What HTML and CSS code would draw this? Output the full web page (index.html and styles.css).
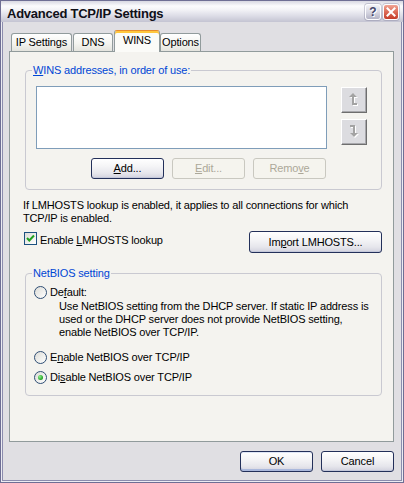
FILE: index.html
```html
<!DOCTYPE html>
<html>
<head>
<meta charset="utf-8">
<link rel="stylesheet" href="styles.css">
</head>
<body>
<div class="window">
  <div class="titlebar">
    <span class="title">Advanced TCP/IP Settings</span>
    <span class="capbtn help">?</span>
    <span class="capbtn close"><svg width="14" height="14" viewBox="0 0 14 14"><path d="M3.5 3.5 L10.5 10.5 M10.5 3.5 L3.5 10.5" stroke="#fff" stroke-width="2" stroke-linecap="square"/></svg></span>
  </div>
  <div class="client">
    <div class="tabs">
      <div class="tab t-ip">IP Settings</div>
      <div class="tab t-dns">DNS</div>
      <div class="tab t-wins active">WINS</div>
      <div class="tab t-opt">Options</div>
    </div>
    <div class="panel">
      <fieldset class="group g-wins">
        <legend><u>W</u>INS addresses, in order of use:</legend>
        <div class="wins-grid">
          <div class="listbox"></div>
          <div class="arrows">
            <span class="arrow"><svg width="10" height="14" viewBox="0 0 10 14"><path d="M5 1 L9 5 H6 V11 H9 V13 H4 V5 H1 Z" fill="#fff"/><path d="M4 0 L8 4 H5 V10 H8 V12 H3 V4 H0 Z" fill="#a3a3a3"/></svg></span>
            <span class="arrow"><svg width="10" height="14" viewBox="0 0 10 14"><path d="M2 1 H7 V9 H10 L6 13 L2 9 H5 V3 H2 Z" fill="#fff"/><path d="M1 0 H6 V8 H9 L5 12 L1 8 H4 V2 H1 Z" fill="#a3a3a3"/></svg></span>
          </div>
          <div class="btnrow">
            <span class="btn"><u>A</u>dd...</span>
            <span class="btn disabled"><u>E</u>dit...</span>
            <span class="btn disabled">Remo<u>v</u>e</span>
          </div>
        </div>
      </fieldset>
      <p class="note">If LMHOSTS lookup is enabled, it applies to all connections for which<br>TCP/IP is enabled.</p>
      <div class="lmrow">
        <div class="check"><span class="cb"><svg width="11" height="11" viewBox="0 0 11 11"><path d="M2 5 L4.3 7.5 L9 2.5" stroke="#21a121" stroke-width="2" fill="none"/></svg></span><span class="cbtext">Enable <u>L</u>MHOSTS lookup</span></div>
        <span class="btn import">Im<u>p</u>ort LMHOSTS...</span>
      </div>
      <fieldset class="group g-nb">
        <legend>NetBIOS setting</legend>
        <div class="radio r-default"><span class="rb"></span><span>De<u>f</u>ault:</span></div>
        <p class="desc">Use NetBIOS setting from the DHCP server. If static IP address is<br>used or the DHCP server does not provide NetBIOS setting,<br>enable NetBIOS over TCP/IP.</p>
        <div class="radio r-enable"><span class="rb"></span><span>E<u>n</u>able NetBIOS over TCP/IP</span></div>
        <div class="radio r-disable"><span class="rb on"></span><span>Di<u>s</u>able NetBIOS over TCP/IP</span></div>
      </fieldset>
    </div>
    <div class="footer">
      <span class="btn default">OK</span>
      <span class="btn">Cancel</span>
    </div>
  </div>
</div>
</body>
</html>
```
FILE: styles.css
```css
* { box-sizing: border-box; }
html, body { margin: 0; padding: 0; }
body {
  font: 11px/13px "Liberation Sans", Arial, sans-serif;
  letter-spacing: -0.15px;
  color: #000;
  background: #fff;
}
u { text-decoration: underline; text-underline-offset: 1px; }

.window {
  width: 404px;
  height: 483px;
  border: 1px solid #6e6e94;
  background: #e0dfe3;
  display: flex;
  flex-direction: column;
  box-shadow: inset 0 0 0 1px #ececf2, inset 0 0 0 2px #8c8cae;
}

.titlebar {
  flex: none;
  height: 21px;
  display: flex;
  align-items: flex-start;
  padding: 0 4px 0 6px;
  background: linear-gradient(to bottom, #d8d8e2 0px, #fbfbfd 5px, #f2f2f6 9px, #dcdce6 15px, #c4c4d2 21px);
}
.title {
  font: bold 13px/17px "Liberation Sans", Arial, sans-serif;
  letter-spacing: -0.25px;
  color: #101018;
  padding-top: 4px;
}
.capbtn {
  width: 16px;
  height: 16px;
  margin-top: 3px;
  border: 1px solid #fdfdff;
  border-radius: 3px;
  display: flex;
  align-items: center;
  justify-content: center;
  box-shadow: 0 0 0 1px rgba(120,120,150,0.35);
}
.help {
  margin-left: auto;
  background: linear-gradient(to bottom, #f2f2f6, #d4d4e0 55%, #b4b4c6);
  color: #45456a;
  font: bold 12px/14px "Liberation Sans", Arial, sans-serif;
  letter-spacing: 0;
  text-shadow: 1px 1px 0 #fff;
}
.close {
  margin-left: 2px;
  background: linear-gradient(to bottom, #f0a494, #dc6a56 50%, #c43c2a);
}

.client {
  flex: 1;
  min-height: 0;
  display: flex;
  flex-direction: column;
  padding: 8px 9px 10px 8px;
}

.tabs {
  flex: none;
  display: flex;
  align-items: flex-end;
  height: 21px;
  padding-left: 2px;
  position: relative;
  z-index: 1;
}
.tab {
  height: 18px;
  border: 1px solid #919b9c;
  border-bottom: 0;
  border-radius: 3px 3px 0 0;
  background: linear-gradient(to bottom, #ffffff, #f4f4f0 55%, #e4e4de);
  padding-top: 2px;
  text-align: center;
  white-space: nowrap;
}
.t-ip { width: 61px; }
.t-dns { width: 40px; margin-left: 1px; }
.t-wins { width: 46px; margin-left: 1px; }
.t-opt { width: 41px; }
.tab.active {
  height: 22px;
  margin-bottom: -1px;
  border-top: 1px solid #e68b2c;
  box-shadow: inset 0 2px 0 #ffc73c;
  background: #fbfbf8;
  padding-top: 3px;
}

.panel {
  flex: 1;
  min-height: 0;
  border: 1px solid #919b9c;
  background: #f4f3ef;
  padding: 12px 11px 0 15px;
}

.group {
  margin: 0;
  border: 1px solid #c9c9d1;
  border-radius: 4px;
  padding: 0 0 0 6px;
  min-width: 0;
}
.group legend {
  padding: 0 1px;
  color: #0046d5;
  line-height: 13px;
}

.wins-grid {
  display: grid;
  grid-template-columns: 291px 26px;
  column-gap: 14px;
  padding: 9px 0 10px 4px;
}
.listbox {
  height: 63px;
  border: 1px solid #7f9db9;
  background: #fff;
}
.arrows {
  display: flex;
  flex-direction: column;
  gap: 6px;
  padding-top: 1px;
}
.arrow {
  width: 26px;
  height: 26px;
  display: flex;
  align-items: center;
  justify-content: center;
  background: #dcdce0;
  border-style: solid;
  border-width: 1px;
  border-color: #ffffff #6e6e6e #6e6e6e #ffffff;
  box-shadow: inset -1px -1px 0 #a8a8ac;
}
.btnrow {
  grid-column: 1;
  display: flex;
  justify-content: flex-end;
  gap: 8px;
  margin-top: 9px;
  margin-right: 1px;
}

.btn {
  display: flex;
  align-items: center;
  justify-content: center;
  width: 73px;
  height: 21px;
  border: 1px solid #23305a;
  border-radius: 3px;
  background: linear-gradient(to bottom, #ffffff, #f4f4f6 40%, #e6e6ec 75%, #d2d2de);
  box-shadow: inset 0 -1px 0 #c4c8da;
  white-space: nowrap;
}
.btn.disabled {
  border-color: #c9c8c0;
  background: #f5f4ee;
  box-shadow: none;
  color: #aca899;
}
.btn.import {
  width: 133px;
  height: 22px;
  margin-left: auto;
}
.btn.default {
  box-shadow: inset 0 -2px 0 #aab8dc, inset 0 1px 0 #dfe6f6;
}

.note {
  margin: 9px 0 0 -2px;
}

.lmrow {
  display: flex;
  align-items: flex-start;
  margin-top: 6px;
}
.check {
  display: flex;
  align-items: flex-start;
  gap: 3px;
  margin-left: -1px;
  padding-top: 1px;
}
.cb {
  width: 13px;
  height: 13px;
  border: 1px solid #1c5180;
  background: linear-gradient(135deg, #dcdcd7, #fff);
  display: flex;
  align-items: center;
  justify-content: center;
}
.cbtext { margin-top: 2px; }

.g-nb {
  margin-top: 14px;
  padding-bottom: 11px;
}
.radio {
  display: flex;
  align-items: center;
  gap: 3px;
  height: 13px;
  margin-left: 2px;
}
.r-default { margin-top: 6px; }
.r-enable { margin-top: 12px; }
.r-disable { margin-top: 7px; }
.rb {
  width: 13px;
  height: 13px;
  border-radius: 50%;
  border: 1px solid #2f4e74;
  background: linear-gradient(135deg, #dcdcd7, #ffffff);
  display: flex;
  align-items: center;
  justify-content: center;
}
.rb.on::after {
  content: "";
  width: 5px;
  height: 5px;
  border-radius: 50%;
  background: radial-gradient(circle at 35% 35%, #8ef08e, #21a121 70%);
}
.desc {
  margin: 1px 0 0 27px;
}

.footer {
  flex: none;
  display: flex;
  justify-content: flex-end;
  gap: 8px;
  margin-top: 9px;
}
```
